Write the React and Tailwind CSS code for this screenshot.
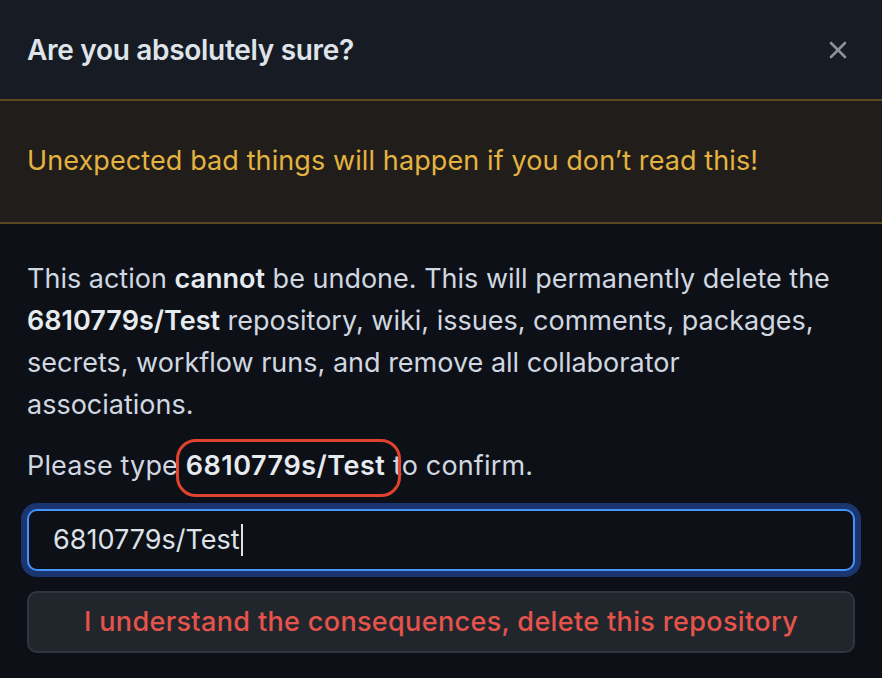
const App = () => {
  return (
    <div className="w-[882px] h-[678px] overflow-hidden bg-[#0d1117] font-['Inter','Noto_Sans',sans-serif] text-[#d1d7e0]">
      {/* Header */}
      <div className="h-[99px] bg-[#171b24] pl-[27px] pr-[35px] flex items-center justify-between">
        <h2 className="text-[28px] font-semibold text-[#dfe4ea] tracking-[-0.3px]">Are you absolutely sure?</h2>
        <svg width="18" height="18" viewBox="0 0 18 18" className="text-[#8b929c]">
          <path d="M2 2L16 16M16 2L2 16" stroke="currentColor" strokeWidth="2.6" strokeLinecap="round" />
        </svg>
      </div>

      {/* Warning */}
      <div className="h-[125px] bg-[#211d1a] border-y-2 border-[#5b4820] px-[27px] flex items-center">
        <p className="text-[27px] text-[#e3b341] tracking-[0.1px]">Unexpected bad things will happen if you don’t read this!</p>
      </div>

      {/* Body */}
      <div className="px-[27px] pt-[34px]">
        <p className="text-[27px] leading-[42px] pr-[16px]">
          This action <strong className="font-semibold text-[#e6ebf0]">cannot</strong> be undone. This will permanently delete the{" "}
          <strong className="font-semibold text-[#e6ebf0]">6810779s/Test</strong> repository, wiki, issues, comments, packages,
          secrets, workflow runs, and remove all collaborator associations.
        </p>

        <p className="text-[27px] leading-[42px] tracking-[0.15px] mt-[19px]">
          Please type{" "}
          <span className="relative">
            <strong className="font-semibold text-[#e6ebf0] tracking-[0.5px]">6810779s/Test</strong>
            <span className="absolute left-[-10px] right-[-16px] top-[-10px] bottom-[-15px] border-[3px] border-[#e0432d] rounded-[20px]" />
          </span>{" "}
          to confirm.
        </p>

        <div className="mt-[22px] h-[62px] rounded-[10px] border-2 border-[#4493f8] ring-[6px] ring-[#1b3571] bg-[#0d1117] px-[24px] flex items-center">
          <span className="text-[27px] text-[#dde2e8]">6810779s/Test</span>
          <span className="w-[2px] h-[32px] bg-[#dde2e8] ml-[1px]" />
        </div>

        <button className="mt-[20px] w-full h-[62px] rounded-[10px] border-2 border-[#30363d] bg-[#21262d] text-[27px] font-medium tracking-[0.35px] text-[#e5534b] flex items-center justify-center">
          I understand the consequences, delete this repository
        </button>
      </div>
    </div>
  );
};

export default App;
